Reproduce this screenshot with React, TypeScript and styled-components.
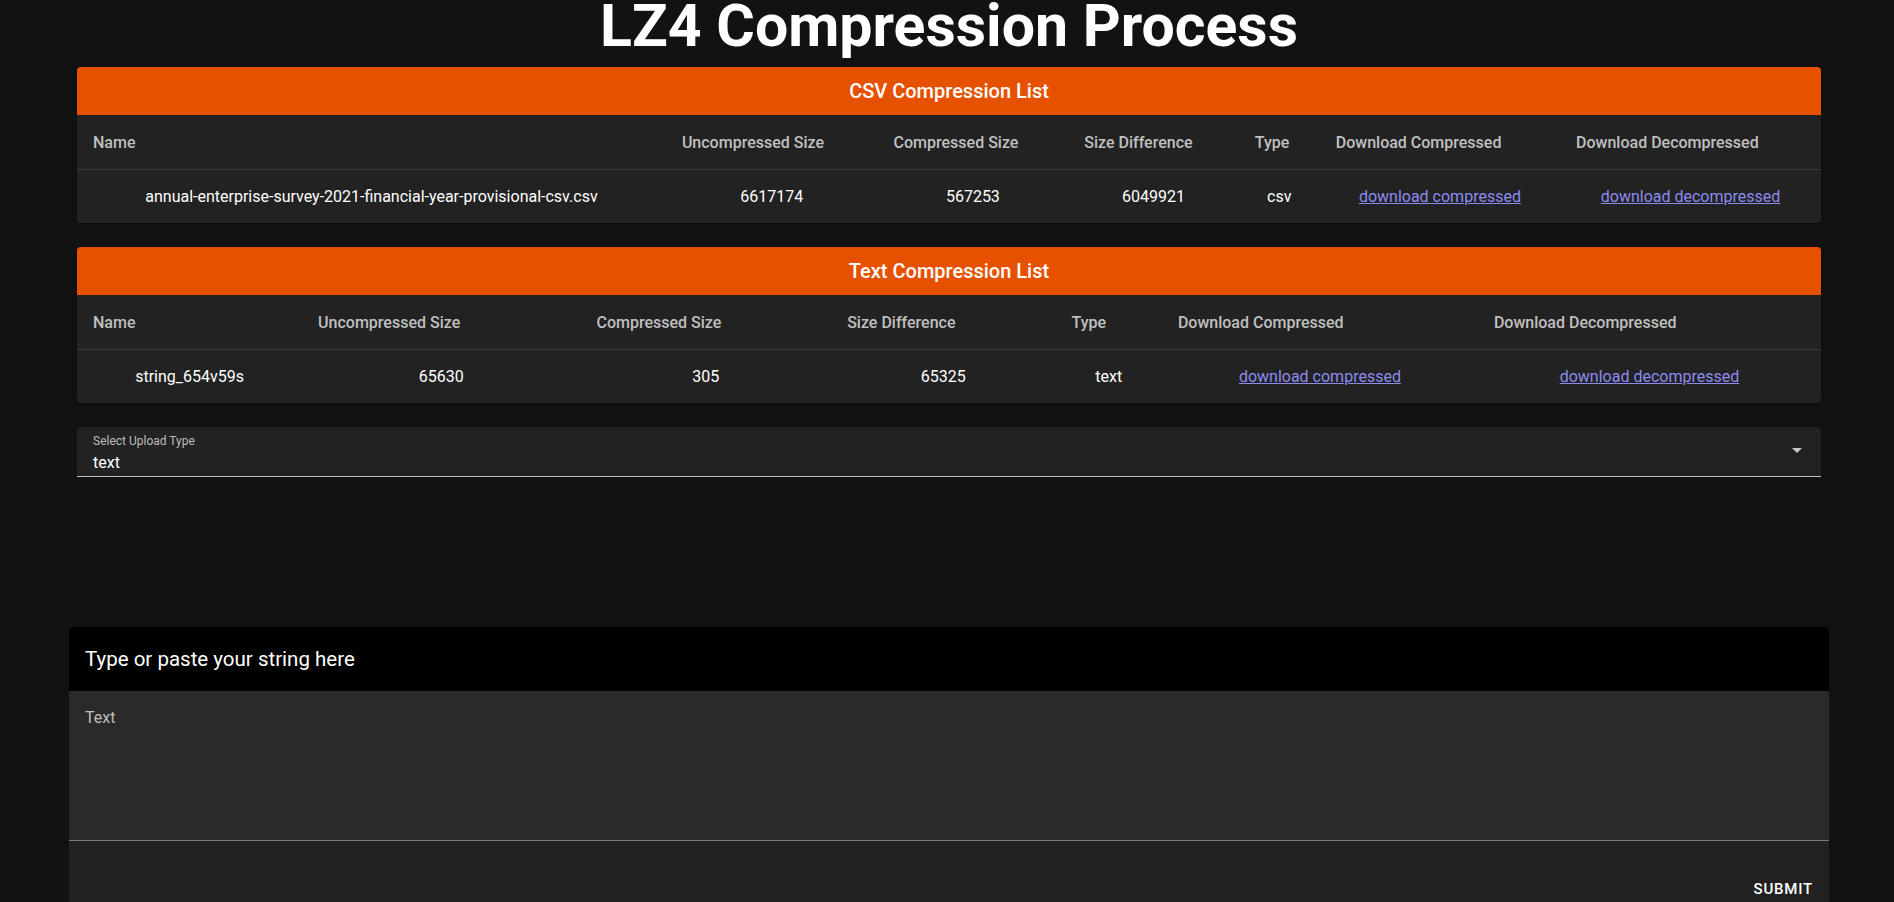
import React from "react";
import styled, { createGlobalStyle } from "styled-components";

const GlobalStyle = createGlobalStyle`
  html, body {
    margin: 0;
    padding: 0;
    background: #121212;
    color: #fff;
    font-family: Roboto, "Liberation Sans", Arial, sans-serif;
  }
  * { box-sizing: border-box; }
`;

const Page = styled.div`
  display: flex;
  flex-direction: column;
  align-items: center;
  padding-left: 4px;
  min-height: 100vh;
`;

const Title = styled.h1`
  margin: 0 0 17px;
  padding-top: 1px;
  font-size: 59px;
  font-weight: 700;
  line-height: 49px;
  color: #fff;
  text-align: center;
`;

const Stack = styled.div`
  width: 1744px;
  display: flex;
  flex-direction: column;
  gap: 24px;
`;

const Card = styled.section`
  background: #222222;
  border-radius: 4px;
  overflow: hidden;
  box-shadow: 0 2px 1px -1px rgba(0, 0, 0, 0.2), 0 1px 1px 0 rgba(0, 0, 0, 0.14),
    0 1px 3px 0 rgba(0, 0, 0, 0.12);
`;

const CardTitle = styled.h2`
  margin: 0;
  padding: 8px;
  background: #e65100;
  color: #fff;
  font-size: 20px;
  font-weight: 500;
  line-height: 32px;
  text-align: center;
`;

const Table = styled.table`
  width: 100%;
  border-collapse: collapse;
`;

const HeadCell = styled.th`
  text-align: left;
  padding: 17px 16px 15px;
  font-size: 16px;
  font-weight: 500;
  line-height: 22px;
  color: rgba(255, 255, 255, 0.72);
  border-bottom: 1px solid #3c3c3c;
  white-space: nowrap;
`;

const Cell = styled.td`
  text-align: center;
  padding: 17px 16px 15px;
  font-size: 16px;
  font-weight: 400;
  line-height: 20px;
  color: #fff;
  border-bottom: 1px solid #262626;
  white-space: nowrap;
`;

const Link = styled.a`
  color: #8c8cf0;
  text-decoration: underline;
  cursor: pointer;
`;

const SelectField = styled.div`
  display: flex;
  align-items: center;
  background: #222222;
  border-radius: 4px 4px 0 0;
  border-bottom: 1px solid #c4c4c4;
  padding: 6px 12px 2px 16px;
`;

const SelectBody = styled.div`
  flex: 1;
  display: flex;
  flex-direction: column;
  gap: 2px;
`;

const SelectLabel = styled.span`
  font-size: 12px;
  line-height: 16px;
  color: rgba(255, 255, 255, 0.7);
`;

const SelectValue = styled.span`
  font-size: 16px;
  line-height: 23px;
  color: #fff;
`;

const ArrowIcon = styled.svg`
  width: 24px;
  height: 24px;
  fill: rgba(255, 255, 255, 0.75);
  margin-top: -8px;
`;

const InputCard = styled.section`
  width: 1760px;
  margin-top: 150px;
  background: #212121;
  border-radius: 4px;
  overflow: hidden;
`;

const InputHeader = styled.div`
  background: #000;
  padding: 0 16px;
  height: 64px;
  display: flex;
  align-items: center;
  font-size: 20.5px;
  font-weight: 400;
  color: #fff;
`;

const TextArea = styled.textarea`
  display: block;
  width: 100%;
  height: 150px;
  margin: 0;
  padding: 15px 16px 0;
  background: #2a2a2a;
  border: none;
  border-bottom: 1px solid #7a7a7a;
  resize: none;
  outline: none;
  color: #fff;
  font-family: Roboto, "Liberation Sans", Arial, sans-serif;
  font-size: 16px;
  line-height: 23px;
  &::placeholder {
    color: rgba(255, 255, 255, 0.7);
    opacity: 1;
  }
`;

const Actions = styled.div`
  display: flex;
  justify-content: flex-end;
  padding: 30px 8px 8px;
`;

const TextButton = styled.button`
  background: transparent;
  border: none;
  padding: 6px 8px;
  font-family: Roboto, "Liberation Sans", Arial, sans-serif;
  font-size: 15px;
  font-weight: 500;
  line-height: 24.5px;
  letter-spacing: 0.8px;
  text-transform: uppercase;
  color: #fff;
  cursor: pointer;
`;

type Row = {
  name: string;
  uncompressed: number;
  compressed: number;
  type: string;
};

const headers = [
  "Name",
  "Uncompressed Size",
  "Compressed Size",
  "Size Difference",
  "Type",
  "Download Compressed",
  "Download Decompressed",
];

function CompressionList({ title, rows }: { title: string; rows: Row[] }) {
  return (
    <Card>
      <CardTitle>{title}</CardTitle>
      <Table>
        <thead>
          <tr>
            {headers.map((h) => (
              <HeadCell key={h}>{h}</HeadCell>
            ))}
          </tr>
        </thead>
        <tbody>
          {rows.map((r) => (
            <tr key={r.name}>
              <Cell>{r.name}</Cell>
              <Cell>{r.uncompressed}</Cell>
              <Cell>{r.compressed}</Cell>
              <Cell>{r.uncompressed - r.compressed}</Cell>
              <Cell>{r.type}</Cell>
              <Cell>
                <Link>download compressed</Link>
              </Cell>
              <Cell>
                <Link>download decompressed</Link>
              </Cell>
            </tr>
          ))}
        </tbody>
      </Table>
    </Card>
  );
}

export default function App() {
  return (
    <>
      <GlobalStyle />
      <Page>
        <Title>LZ4 Compression Process</Title>
        <Stack>
          <CompressionList
            title="CSV Compression List"
            rows={[
              {
                name: "annual-enterprise-survey-2021-financial-year-provisional-csv.csv",
                uncompressed: 6617174,
                compressed: 567253,
                type: "csv",
              },
            ]}
          />
          <CompressionList
            title="Text Compression List"
            rows={[
              {
                name: "string_654v59s",
                uncompressed: 65630,
                compressed: 305,
                type: "text",
              },
            ]}
          />
          <SelectField>
            <SelectBody>
              <SelectLabel>Select Upload Type</SelectLabel>
              <SelectValue>text</SelectValue>
            </SelectBody>
            <ArrowIcon viewBox="0 0 24 24">
              <path d="M7 10l5 5 5-5z" />
            </ArrowIcon>
          </SelectField>
        </Stack>
        <InputCard>
          <InputHeader>Type or paste your string here</InputHeader>
          <TextArea placeholder="Text" />
          <Actions>
            <TextButton>Submit</TextButton>
          </Actions>
        </InputCard>
      </Page>
    </>
  );
}
